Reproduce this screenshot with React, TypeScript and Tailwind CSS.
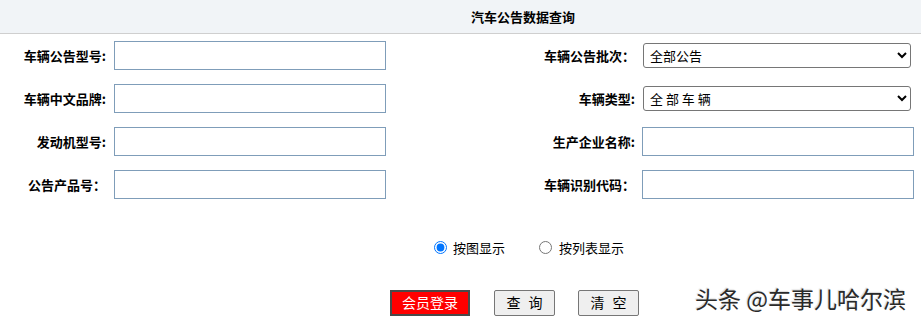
const font = { fontFamily: '"Noto Sans CJK SC", "Noto Sans", sans-serif' };

type Field = {
  label: string;
  kind: "input" | "select";
  options?: string[];
};

const rows: [Field, Field][] = [
  [
    { label: "车辆公告型号:", kind: "input" },
    { label: "车辆公告批次：", kind: "select", options: ["全部公告"] },
  ],
  [
    { label: "车辆中文品牌:", kind: "input" },
    { label: "车辆类型:", kind: "select", options: ["全 部 车 辆"] },
  ],
  [
    { label: "发动机型号:", kind: "input" },
    { label: "生产企业名称:", kind: "input" },
  ],
  [
    { label: "公告产品号：", kind: "input" },
    { label: "车辆识别代码：", kind: "input" },
  ],
];

function Control({ field, right }: { field: Field; right?: boolean }) {
  if (field.kind === "select") {
    return (
      <select className="ml-[8px] h-[25px] w-[268px] rounded-[3px] border border-[#767676] bg-white pl-[2px] text-[13px] text-black">
        {field.options?.map((o) => (
          <option key={o}>{o}</option>
        ))}
      </select>
    );
  }
  return (
    <input
      type="text"
      className={`h-[29px] w-[272px] border border-[#7f9db9] bg-white ${right ? "ml-[7px]" : "ml-[8px]"}`}
    />
  );
}

function GrayButton({ chars, className }: { chars: string[]; className: string }) {
  return (
    <button
      className={`flex h-[26px] w-[61px] items-center justify-center gap-[8px] rounded-[2px] border border-[#767676] bg-[#efefef] text-[14px] ${className}`}
    >
      {chars.map((c) => (
        <span key={c}>{c}</span>
      ))}
    </button>
  );
}

export default function App() {
  return (
    <div className="relative h-[321px] w-[921px] overflow-hidden bg-white text-black" style={font}>
      <header className="flex h-[34px] items-center border-b border-[#cfcfcf] bg-[#f1f4f7] pl-[471px]">
        <h1 className="text-[13px] font-bold">汽车公告数据查询</h1>
      </header>

      <div className="flex flex-col">
        {rows.map(([left, right]) => (
          <div key={left.label} className="flex h-[43px] items-center">
            <label className="w-[106px] text-right text-[13px] font-bold">{left.label}</label>
            <Control field={left} />
            <label className="w-[249px] text-right text-[13px] font-bold">{right.label}</label>
            <Control field={right} right />
          </div>
        ))}
      </div>

      <div className="mt-[32px] flex items-center pl-[434px] text-[13px]">
        <label className="flex items-center gap-[6px]">
          <input type="radio" name="view" defaultChecked className="h-[13px] w-[13px]" />
          <span>按图显示</span>
        </label>
        <label className="ml-[34px] flex items-center gap-[7px]">
          <input type="radio" name="view" className="h-[13px] w-[13px]" />
          <span>按列表显示</span>
        </label>
      </div>

      <div className="mt-[32px] flex items-center pl-[390px]">
        <button className="h-[26px] w-[80px] border-2 border-[#4a4a4a] bg-[#ff0000] text-[14px] text-white">
          会员登录
        </button>
        <GrayButton chars={["查", "询"]} className="ml-[24px]" />
        <GrayButton chars={["清", "空"]} className="ml-[23px]" />
      </div>

      <div className="absolute left-[695px] top-[283px] text-[23px] leading-[30px] text-[#2a2a2a] [text-shadow:1px_1px_1px_#ffffff,-1px_-1px_1px_rgba(0,0,0,0.15)]">
        头条 @车事儿哈尔滨
      </div>
    </div>
  );
}
